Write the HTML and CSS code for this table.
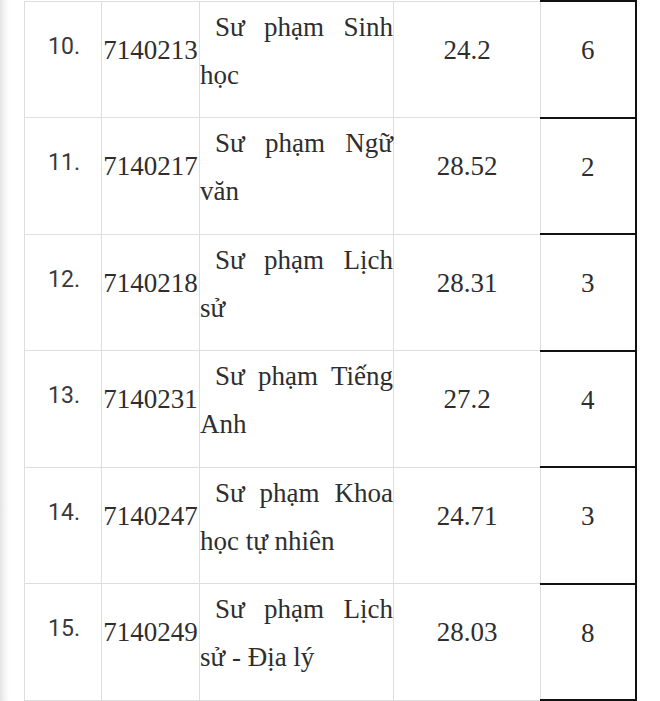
FILE: index.html
```html
<!DOCTYPE html>
<html lang="vi">
<head>
<meta charset="utf-8">
<title>Bảng điểm chuẩn</title>
<link rel="stylesheet" href="styles.css">
</head>
<body>
<div class="edge"></div>
<table class="scores">
  <colgroup>
    <col class="c-no"><col class="c-code"><col class="c-name"><col class="c-score"><col class="c-rank">
  </colgroup>
  <tbody>
    <tr>
      <td class="no">10.</td>
      <td class="code">7140213</td>
      <td class="name">Sư phạm Sinh học</td>
      <td class="score">24.2</td>
      <td class="rank">6</td>
    </tr>
    <tr>
      <td class="no">11.</td>
      <td class="code">7140217</td>
      <td class="name">Sư phạm Ngữ văn</td>
      <td class="score">28.52</td>
      <td class="rank">2</td>
    </tr>
    <tr>
      <td class="no">12.</td>
      <td class="code">7140218</td>
      <td class="name">Sư phạm Lịch sử</td>
      <td class="score">28.31</td>
      <td class="rank">3</td>
    </tr>
    <tr>
      <td class="no">13.</td>
      <td class="code">7140231</td>
      <td class="name">Sư phạm Tiếng Anh</td>
      <td class="score">27.2</td>
      <td class="rank">4</td>
    </tr>
    <tr>
      <td class="no">14.</td>
      <td class="code">7140247</td>
      <td class="name">Sư phạm Khoa học tự nhiên</td>
      <td class="score">24.71</td>
      <td class="rank">3</td>
    </tr>
    <tr>
      <td class="no">15.</td>
      <td class="code">7140249</td>
      <td class="name">Sư phạm Lịch sử - Địa lý</td>
      <td class="score">28.03</td>
      <td class="rank">8</td>
    </tr>
  </tbody>
</table>
</body>
</html>
```
FILE: styles.css
```css
html, body {
  margin: 0;
  padding: 0;
  background: #ffffff;
}

body {
  position: relative;
  height: 701px;
  overflow: hidden;
}

.edge {
  position: absolute;
  left: 0;
  top: 0;
  width: 9px;
  height: 100%;
  background: linear-gradient(to right, #e4e4e4 0%, #f3f3f3 50%, #ffffff 100%);
}

.scores {
  margin-left: 24px;
  width: 612px;
  border-collapse: collapse;
  table-layout: fixed;
  color: #2e2e2e;
  font-family: "Liberation Serif", "Times New Roman", serif;
  font-size: 27px;
  line-height: 48px;
}

.c-no { width: 77px; }
.c-code { width: 98px; }
.c-name { width: 194px; }
.c-score { width: 147px; }
.c-rank { width: 95px; }

.scores tr {
  height: 116.5px;
}

.scores td {
  border: 1px solid #dedede;
  vertical-align: top;
  padding: 0;
  text-align: center;
  box-sizing: border-box;
}

.scores td.no {
  font-family: Roboto, "Liberation Sans", Arial, sans-serif;
  font-size: 23px;
  color: #3a3a3a;
  padding-top: 21px;
  padding-left: 2px;
}

.scores td.code {
  padding-top: 24px;
  white-space: nowrap;
}

.scores td.name {
  text-align: justify;
  text-indent: 15px;
  padding-top: 1px;
}

.scores td.score {
  padding-top: 24px;
}

.scores td.rank {
  padding-top: 24px;
  border-top: 2px solid #111111;
  border-bottom: 2px solid #111111;
  border-right: 2px solid #111111;
  border-left: 1px solid #dedede;
}
```
